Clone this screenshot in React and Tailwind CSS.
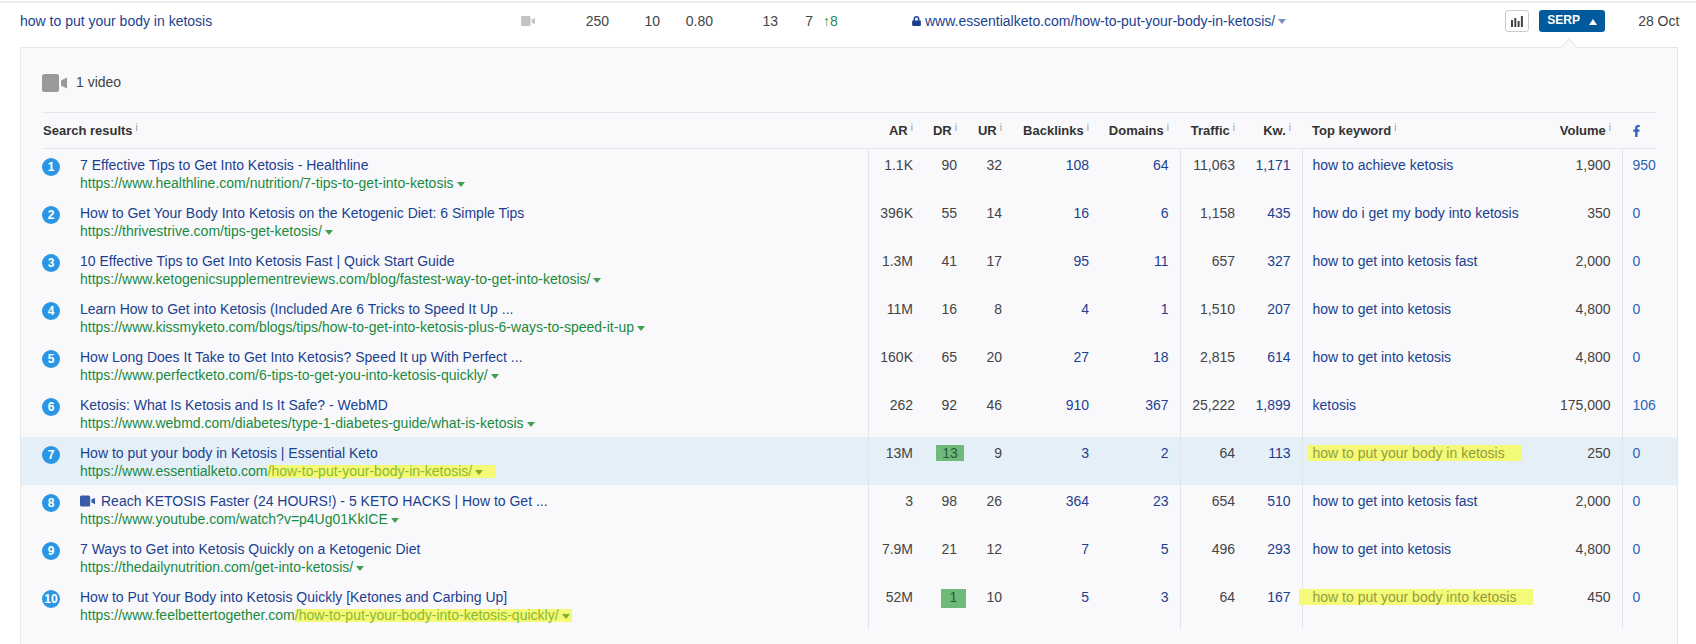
import { FaFacebookF, FaLock } from "react-icons/fa";

const rows = [
  { title: "7 Effective Tips to Get Into Ketosis - Healthline", url: "https://www.healthline.com/nutrition/7-tips-to-get-into-ketosis", ar: "1.1K", dr: "90", ur: "32", bl: "108", dom: "64", tr: "11,063", kw: "1,171", top: "how to achieve ketosis", vol: "1,900", fb: "950" },
  { title: "How to Get Your Body Into Ketosis on the Ketogenic Diet: 6 Simple Tips", url: "https://thrivestrive.com/tips-get-ketosis/", ar: "396K", dr: "55", ur: "14", bl: "16", dom: "6", tr: "1,158", kw: "435", top: "how do i get my body into ketosis", vol: "350", fb: "0" },
  { title: "10 Effective Tips to Get Into Ketosis Fast | Quick Start Guide", url: "https://www.ketogenicsupplementreviews.com/blog/fastest-way-to-get-into-ketosis/", ar: "1.3M", dr: "41", ur: "17", bl: "95", dom: "11", tr: "657", kw: "327", top: "how to get into ketosis fast", vol: "2,000", fb: "0" },
  { title: "Learn How to Get into Ketosis (Included Are 6 Tricks to Speed It Up ...", url: "https://www.kissmyketo.com/blogs/tips/how-to-get-into-ketosis-plus-6-ways-to-speed-it-up", ar: "11M", dr: "16", ur: "8", bl: "4", dom: "1", tr: "1,510", kw: "207", top: "how to get into ketosis", vol: "4,800", fb: "0" },
  { title: "How Long Does It Take to Get Into Ketosis? Speed It up With Perfect ...", url: "https://www.perfectketo.com/6-tips-to-get-you-into-ketosis-quickly/", ar: "160K", dr: "65", ur: "20", bl: "27", dom: "18", tr: "2,815", kw: "614", top: "how to get into ketosis", vol: "4,800", fb: "0" },
  { title: "Ketosis: What Is Ketosis and Is It Safe? - WebMD", url: "https://www.webmd.com/diabetes/type-1-diabetes-guide/what-is-ketosis", ar: "262", dr: "92", ur: "46", bl: "910", dom: "367", tr: "25,222", kw: "1,899", top: "ketosis", vol: "175,000", fb: "106" },
  { title: "How to put your body in Ketosis | Essential Keto", url: "https://www.essentialketo.com", mark: "/how-to-put-your-body-in-ketosis/", markPad: "pr-[12px]", ar: "13M", dr: "13", drMark: "w-[28px] h-[16px] -mr-[7px]", ur: "9", bl: "3", dom: "2", tr: "64", kw: "113", top: "how to put your body in ketosis", topMark: "-ml-[5px] pl-[5px] pr-[17px] h-[16px]", vol: "250", fb: "0" },
  { title: "Reach KETOSIS Faster (24 HOURS!) - 5 KETO HACKS | How to Get ...", url: "https://www.youtube.com/watch?v=p4Ug01KkICE", video: true, ar: "3", dr: "98", ur: "26", bl: "364", dom: "23", tr: "654", kw: "510", top: "how to get into ketosis fast", vol: "2,000", fb: "0" },
  { title: "7 Ways to Get into Ketosis Quickly on a Ketogenic Diet", url: "https://thedailynutrition.com/get-into-ketosis/", ar: "7.9M", dr: "21", ur: "12", bl: "7", dom: "5", tr: "496", kw: "293", top: "how to get into ketosis", vol: "4,800", fb: "0" },
  { title: "How to Put Your Body into Ketosis Quickly [Ketones and Carbing Up]", url: "https://www.feelbettertogether.com", mark: "/how-to-put-your-body-into-ketosis-quickly/", markPad: "pr-[2px]", ar: "52M", dr: "1", drMark: "w-[25px] h-[19px] -mr-[9px]", ur: "10", bl: "5", dom: "3", tr: "64", kw: "167", top: "how to put your body into ketosis", topMark: "mt-px -ml-[14px] pl-[14px] pr-[17px] h-[16px]", vol: "450", fb: "0" },
];

function VideoIcon({ className }) {
  return (
    <svg viewBox="0 0 25 18" className={className} fill="currentColor">
      <rect x="0" y="0" width="17" height="18" rx="2.5" />
      <path d="M19 6.5 L25 3.5 V14.5 L19 11.5 Z" />
    </svg>
  );
}

function Info() {
  return <sup className="ml-[3px] top-[-4px] text-[10px] font-normal text-[#999]">i</sup>;
}

function Caret({ className }) {
  return <span className={`ml-[3px] inline-block h-0 w-0 border-x-[4px] border-t-[5px] border-x-transparent align-[1px] ${className}`} />;
}

function Th({ label }) {
  return (
    <th className="pr-[11px] text-right text-[13px] font-bold text-[#333]">
      {label}
      <Info />
    </th>
  );
}

function Row({ row, index }) {
  const num = "pr-[11px] pt-[7px] text-right align-top leading-[18px]";
  return (
    <tr className="h-[48px]">
      <td className="align-top">
        <div className="flex">
          <div className="mt-[9px] flex h-[18px] w-[18px] shrink-0 items-center justify-center rounded-full bg-[#2a97e4] text-[12px] font-bold text-white">
            {index + 1}
          </div>
          <div className="ml-[20px] pt-[7px] leading-[18px]">
            <div className="flex items-center text-[#1c3f8f]">
              {row.video && <VideoIcon className="mr-[6px] h-[12px] w-[15px] text-[#3a5ba8]" />}
              {row.title}
            </div>
            <div className="text-[#1a8a3f]">
              {row.url}
              {row.mark ? (
                <span className={`inline-block h-[13px] bg-[#f4fa78] leading-[13px] text-[#8cb82e] ${row.markPad}`}>
                  {row.mark}
                  <Caret className="border-t-[#7fb02c]" />
                </span>
              ) : (
                <Caret className="border-t-[#3f9e50]" />
              )}
            </div>
          </div>
        </div>
      </td>
      <td className={`${num} border-l border-[#e3e5e9] text-[#444]`}>{row.ar}</td>
      <td className={`${num} text-[#444]`}>
        {row.drMark ? (
          <span className={`relative inline-block bg-[#6fb97a] text-center leading-[16px] text-[#2b5b35] ${row.drMark}`}>{row.dr}</span>
        ) : (
          row.dr
        )}
      </td>
      <td className={`${num} text-[#444]`}>{row.ur}</td>
      <td className={`${num} text-[#1c3f8f]`}>{row.bl}</td>
      <td className={`${num} text-[#1c3f8f]`}>{row.dom}</td>
      <td className={`${num} border-l border-[#e3e5e9] text-[#444]`}>{row.tr}</td>
      <td className={`${num} text-[#1c3f8f]`}>{row.kw}</td>
      <td className="border-l border-[#e3e5e9] pl-[10px] pt-[7px] align-top leading-[18px] text-[#1c3f8f]">
        {row.topMark ? (
          <span className={`inline-block whitespace-nowrap bg-[#f4fa78] leading-[16px] text-[#939c3c] ${row.topMark}`}>{row.top}</span>
        ) : (
          row.top
        )}
      </td>
      <td className={`${num} text-[#444]`}>{row.vol}</td>
      <td className="border-l border-[#e3e5e9] pl-[10px] pt-[7px] align-top leading-[18px] text-[#2b62b5]">{row.fb}</td>
    </tr>
  );
}

export default function App() {
  return (
    <div className="h-[644px] overflow-hidden bg-white pt-px text-[14px] font-['Liberation_Sans',Arial,sans-serif] text-[#444]">
      <div className="border-t-2 border-[#ebebeb]">
        <div className="flex h-[44px] items-center pb-[8px] pl-[20px] leading-[18px]">
          <span className="w-[501px] text-[#1c3f8f]">how to put your body in ketosis</span>
          <VideoIcon className="h-[10px] w-[14px] text-[#c4c4c4]" />
          <span className="w-[74px] text-right">250</span>
          <span className="w-[51px] text-right">10</span>
          <span className="w-[53px] text-right">0.80</span>
          <span className="w-[65px] text-right">13</span>
          <span className="w-[35px] text-right">7</span>
          <span className="ml-[10px] w-[18px] text-[#1f8a4c]">↑8</span>
          <FaLock className="ml-[71px] h-[10px] w-[9px] text-[#1c3f8f]" />
          <span className="ml-[4px] text-[#1c3f8f]">www.essentialketo.com/how-to-put-your-body-in-ketosis/</span>
          <Caret className="border-t-[#7a8ec4]" />
          <button className="ml-[219px] flex h-[22px] w-[24px] items-center justify-center rounded-[3px] border border-[#ccc] bg-white">
            <svg viewBox="0 0 12 11" className="h-[11px] w-[12px]" fill="#444">
              <rect x="0" y="4" width="2" height="7" />
              <rect x="3.3" y="2" width="2" height="9" />
              <rect x="6.6" y="5" width="2" height="6" />
              <rect x="9.9" y="0" width="2" height="11" />
            </svg>
          </button>
          <button className="ml-[10px] flex h-[22px] w-[66px] items-center justify-center gap-[9px] rounded-[3px] bg-[#005a9c] pb-[2px] text-[12px] font-bold text-white">
            SERP
            <span className="mt-[3px] h-0 w-0 border-x-[4px] border-b-[6px] border-x-transparent border-b-white" />
          </button>
          <span className="ml-[33px]">28 Oct</span>
        </div>
      </div>

      <div className="relative ml-[20px] w-[1658px] border border-[#e6e7ea] bg-[#f9f9fb] px-[21px] pb-[20px]">
        <div className="absolute left-[1542px] top-[-7px] h-[12px] w-[12px] rotate-45 border-l border-t border-[#e6e7ea] bg-[#f9f9fb]" />
        {/* active row band runs past the table, edge to edge of the panel */}
        <div className="absolute inset-x-0 top-[389px] h-[48px] bg-[#e4eff8]" />
        <div className="flex h-[64px] items-center pt-[5px]">
          <VideoIcon className="h-[18px] w-[25px] text-[#999]" />
          <span className="ml-[9px]">1 video</span>
        </div>
        <table className="relative w-[1614px] table-fixed border-collapse">
          <colgroup>
            <col className="w-[826px]" />
            <col className="w-[56px]" />
            <col className="w-[44px]" />
            <col className="w-[45px]" />
            <col className="w-[87px]" />
            <col className="w-[80px]" />
            <col className="w-[66px]" />
            <col className="w-[56px]" />
            <col className="w-[220px]" />
            <col className="w-[100px]" />
            <col className="w-[34px]" />
          </colgroup>
          <thead>
            <tr className="h-[36px] border-y border-[#e6e7ea]">
              <th className="pl-px text-left text-[13px] font-bold text-[#333]">
                Search results
                <Info />
              </th>
              <Th label="AR" />
              <Th label="DR" />
              <Th label="UR" />
              <Th label="Backlinks" />
              <Th label="Domains" />
              <Th label="Traffic" />
              <Th label="Kw." />
              <th className="pl-[10px] text-left text-[13px] font-bold text-[#333]">
                Top keyword
                <Info />
              </th>
              <Th label="Volume" />
              <th className="pl-[10px] text-left">
                <FaFacebookF className="h-[12px] w-[9px] text-[#2b62b5]" />
              </th>
            </tr>
          </thead>
          <tbody>
            {rows.map((row, i) => (
              <Row key={i} row={row} index={i} />
            ))}
          </tbody>
        </table>
      </div>
    </div>
  );
}
